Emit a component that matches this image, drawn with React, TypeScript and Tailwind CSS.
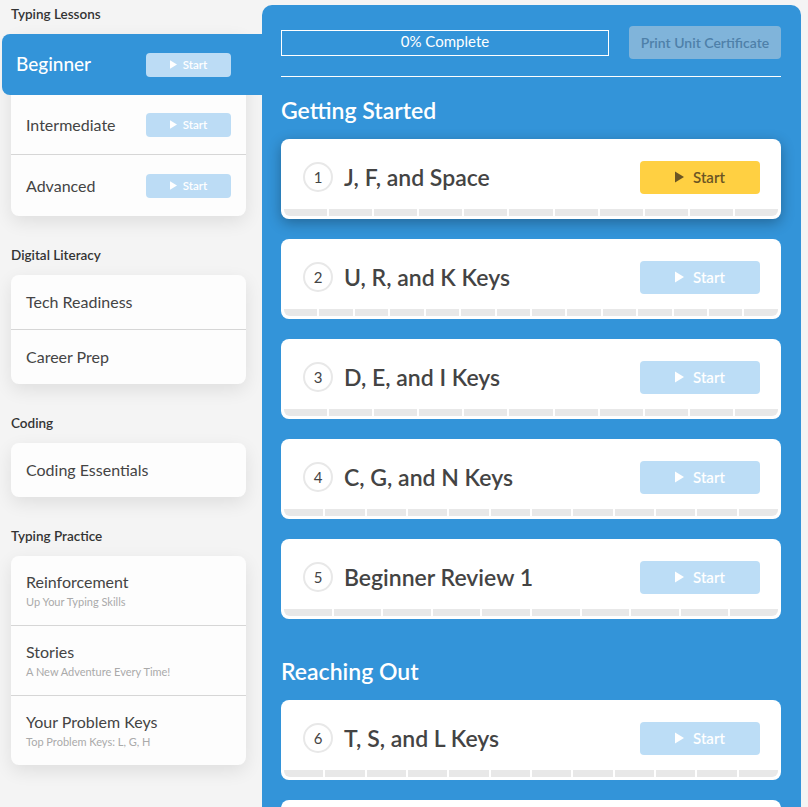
import React from "react";

const font = { fontFamily: "Lato, 'Open Sans', sans-serif" };

function Play({ className }: { className?: string }) {
  return (
    <svg viewBox="0 0 10 12" className={className} fill="currentColor">
      <path d="M0 0 L10 6 L0 12 Z" />
    </svg>
  );
}

function SmallStart() {
  return (
    <div className="flex h-[24px] w-[85px] items-center justify-center gap-[6px] rounded-[4px] bg-[#bcdcf5] text-[11.5px] font-semibold text-white">
      <Play className="h-[9px] w-[7px]" />
      <span>Start</span>
    </div>
  );
}

function Heading({ children, first }: { children: React.ReactNode; first?: boolean }) {
  return (
    <div
      className={`${first ? "mt-[4px]" : "mt-[29px]"} mb-[10px] ml-[11px] h-[20px] text-[13.5px] font-semibold leading-[20px] text-[#333]`}
    >
      {children}
    </div>
  );
}

function SideCard({ children }: { children: React.ReactNode }) {
  return (
    <div className="ml-[11px] w-[235px] rounded-[8px] bg-[#fdfdfd] shadow-[0_6px_18px_rgba(0,0,0,0.09)]">
      {children}
    </div>
  );
}

function SimpleRow({ label, last }: { label: string; last?: boolean }) {
  return (
    <div
      className={`flex items-center px-[15px] text-[16px] text-[#444] ${last ? "h-[54px]" : "h-[55px] border-b border-[#d6d6d6]"}`}
    >
      {label}
    </div>
  );
}

function SubRow({ label, sub, last }: { label: string; sub: string; last?: boolean }) {
  return (
    <div className={`px-[15px] pt-[16px] pb-[16px] ${last ? "" : "border-b border-[#d6d6d6]"}`}>
      <div className="text-[16px] leading-[20px] text-[#444]">{label}</div>
      <div className="mt-[3px] text-[11px] leading-[14px] text-[#aaa]">{sub}</div>
    </div>
  );
}

function Sidebar() {
  return (
    <div className="w-[262px] shrink-0">
      <Heading first>Typing Lessons</Heading>
      <SideCard>
        <div className="-ml-[9px] -mr-[16px] flex h-[61px] items-center justify-between rounded-l-[8px] bg-[#3394d9] pl-[14px] pr-[31px]">
          <span className="text-[19px] font-medium text-white">Beginner</span>
          <SmallStart />
        </div>
        <div className="flex h-[60px] items-center justify-between border-b border-[#d6d6d6] pl-[15px] pr-[15px]">
          <span className="text-[16px] text-[#444]">Intermediate</span>
          <SmallStart />
        </div>
        <div className="flex h-[61px] items-center justify-between pl-[15px] pr-[15px]">
          <span className="text-[16px] text-[#444]">Advanced</span>
          <SmallStart />
        </div>
      </SideCard>

      <Heading>Digital Literacy</Heading>
      <SideCard>
        <SimpleRow label="Tech Readiness" />
        <SimpleRow label="Career Prep" last />
      </SideCard>

      <Heading>Coding</Heading>
      <SideCard>
        <SimpleRow label="Coding Essentials" last />
      </SideCard>

      <Heading>Typing Practice</Heading>
      <SideCard>
        <SubRow label="Reinforcement" sub="Up Your Typing Skills" />
        <SubRow label="Stories" sub="A New Adventure Every Time!" />
        <SubRow label="Your Problem Keys" sub="Top Problem Keys: L, G, H" last />
      </SideCard>
    </div>
  );
}

type Lesson = { n: number; title: string; segs: number; active?: boolean };

function LessonCard({ l }: { l: Lesson }) {
  return (
    <div
      className={`flex h-[80px] flex-col rounded-[8px] bg-white ${l.active ? "shadow-[0_4px_14px_rgba(0,0,0,0.3)]" : ""}`}
    >
      <div className="flex h-[70px] items-center pl-[22px] pr-[21px] pt-[6px]">
        <div className="flex h-[30px] w-[30px] items-center justify-center rounded-full border-2 border-[#e8e8e8] text-[15px] text-[#444]">
          {l.n}
        </div>
        <div className="ml-[11px] flex-1 text-[23px] font-semibold text-[#444]">{l.title}</div>
        {l.active ? (
          <div className="flex h-[33px] w-[120px] items-center justify-center gap-[9px] rounded-[4px] bg-[#ffd042] text-[15px] font-semibold text-[#6b5524]">
            <Play className="h-[12px] w-[9px]" />
            <span>Start</span>
          </div>
        ) : (
          <div className="flex h-[33px] w-[120px] items-center justify-center gap-[9px] rounded-[4px] bg-[#bcddf6] text-[15px] font-semibold text-white">
            <Play className="h-[12px] w-[9px]" />
            <span>Start</span>
          </div>
        )}
      </div>
      <div className="px-[3px]">
        <div className="flex h-[7px] gap-[2px] overflow-hidden rounded-b-[6px]">
          {Array.from({ length: l.segs }).map((_, i) => (
            <div key={i} className="flex-1 bg-[#e8e8e8]" />
          ))}
        </div>
      </div>
    </div>
  );
}

const section1: Lesson[] = [
  { n: 1, title: "J, F, and Space", segs: 11, active: true },
  { n: 2, title: "U, R, and K Keys", segs: 14 },
  { n: 3, title: "D, E, and I Keys", segs: 11 },
  { n: 4, title: "C, G, and N Keys", segs: 12 },
  { n: 5, title: "Beginner Review 1", segs: 10 },
];

const section2: Lesson[] = [{ n: 6, title: "T, S, and L Keys", segs: 12 }];

function Panel() {
  return (
    <div className="mt-[5px] mr-[7px] flex-1 rounded-t-[10px] bg-[#3394d9] pl-[19px] pr-[20px] pt-[21px]">
      <div className="flex items-center justify-between">
        <div className="flex h-[26px] w-[328px] items-center justify-center border border-white pb-[2px] text-[15px] text-white">
          0% Complete
        </div>
        <div className="flex h-[33px] w-[152px] items-center justify-center rounded-[4px] bg-[#80b4da] text-[14px] font-semibold text-[#4e80a9]">
          Print Unit Certificate
        </div>
      </div>
      <div className="mt-[17px] h-px bg-white" />
      <div className="mt-[19px] mb-[15px] text-[23px] font-semibold leading-[28px] text-white">Getting Started</div>
      <div className="flex flex-col gap-[20px]">
        {section1.map((l) => (
          <LessonCard key={l.n} l={l} />
        ))}
      </div>
      <div className="mt-[38px] mb-[15px] text-[23px] font-semibold leading-[28px] text-white">Reaching Out</div>
      <div className="flex flex-col gap-[20px]">
        {section2.map((l) => (
          <LessonCard key={l.n} l={l} />
        ))}
        <div className="h-[80px] rounded-[8px] bg-white" />
      </div>
    </div>
  );
}

export default function App() {
  return (
    <div style={font} className="flex h-screen w-full overflow-hidden bg-[#f4f4f4]">
      <Sidebar />
      <Panel />
    </div>
  );
}
